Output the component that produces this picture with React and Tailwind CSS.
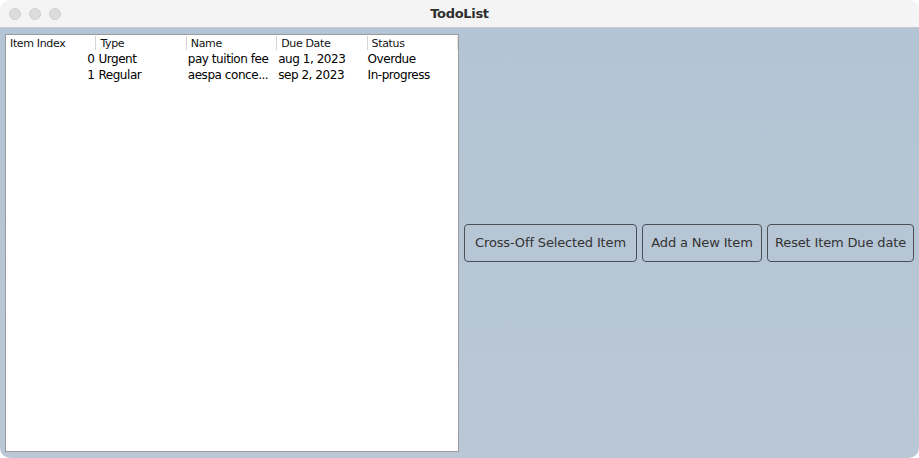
const columns = ["Item Index", "Type", "Name", "Due Date", "Status"];

const rows = [
    { index: 0, type: "Urgent", name: "pay tuition fee", due: "aug 1, 2023", status: "Overdue" },
    { index: 1, type: "Regular", name: "aespa conce...", due: "sep 2, 2023", status: "In-progress" },
];

const buttons = [
    { label: "Cross-Off Selected Item", w: "w-[173px]" },
    { label: "Add a New Item", w: "w-[120px]" },
    { label: "Reset Item Due date", w: "w-[147px]" },
];

const App = () => {
    return (
        <div className="w-[919px] h-[458px] bg-white font-['DejaVu_Sans','Liberation_Sans',sans-serif]">
            <div className="flex flex-col w-full h-full rounded-[10px] overflow-hidden">
                {/* title bar */}
                <div className="relative flex items-center justify-center h-[28px] bg-[#f4f4f4] border-b border-[#c6c9cc]">
                    <div className="absolute left-[9px] top-[8px] flex gap-[8px]">
                        <span className="w-[12px] h-[12px] rounded-full bg-[#dcdcdc] border border-[#cfcfcf]"></span>
                        <span className="w-[12px] h-[12px] rounded-full bg-[#dcdcdc] border border-[#cfcfcf]"></span>
                        <span className="w-[12px] h-[12px] rounded-full bg-[#dcdcdc] border border-[#cfcfcf]"></span>
                    </div>
                    <span className="text-[13px] font-bold text-[#2f2f2f] tracking-tight">TodoList</span>
                </div>
                {/* main */}
                <div className="flex flex-1 bg-gradient-to-b from-[#b3c4d4] to-[#bac8d6]">
                    <div className="pl-[5px] pt-[6px] pb-[6px]">
                        <div className="w-[454px] h-full bg-white border border-[#9c9c9c]">
                            <div className="flex h-[16px] items-center text-[11px] tracking-[-0.35px] text-[#111]">
                                {columns.map((c, i) => (
                                    <div
                                        key={c}
                                        className={`w-[90.4px] h-[14px] flex items-center pl-[4px] leading-none ${
                                            i < 4 ? "border-r border-[#d4d4d4]" : "border-r border-[#e4e4e4]"
                                        }`}
                                    >
                                        {c}
                                    </div>
                                ))}
                            </div>
                            {rows.map((r) => (
                                <div key={r.index} className="flex h-[16px] items-center text-[12px] tracking-[-0.45px] text-black">
                                    <div className="w-[90.4px] text-right pr-[2px]">{r.index}</div>
                                    <div className="w-[90.4px] pl-[2px]">{r.type}</div>
                                    <div className="w-[90.4px] pl-[1px]">{r.name}</div>
                                    <div className="w-[90.4px] pl-[1px]">{r.due}</div>
                                    <div className="w-[90.4px]">{r.status}</div>
                                </div>
                            ))}
                        </div>
                    </div>
                    <div className="flex flex-1 items-center gap-[5px] px-[5px]">
                        {buttons.map((b) => (
                            <button
                                key={b.label}
                                className={`${b.w} h-[38px] rounded-[4px] border border-[#4a4f55] text-[13px] tracking-[-0.15px] text-[#333] whitespace-nowrap`}
                            >
                                {b.label}
                            </button>
                        ))}
                    </div>
                </div>
            </div>
        </div>
    );
};

export default App;
